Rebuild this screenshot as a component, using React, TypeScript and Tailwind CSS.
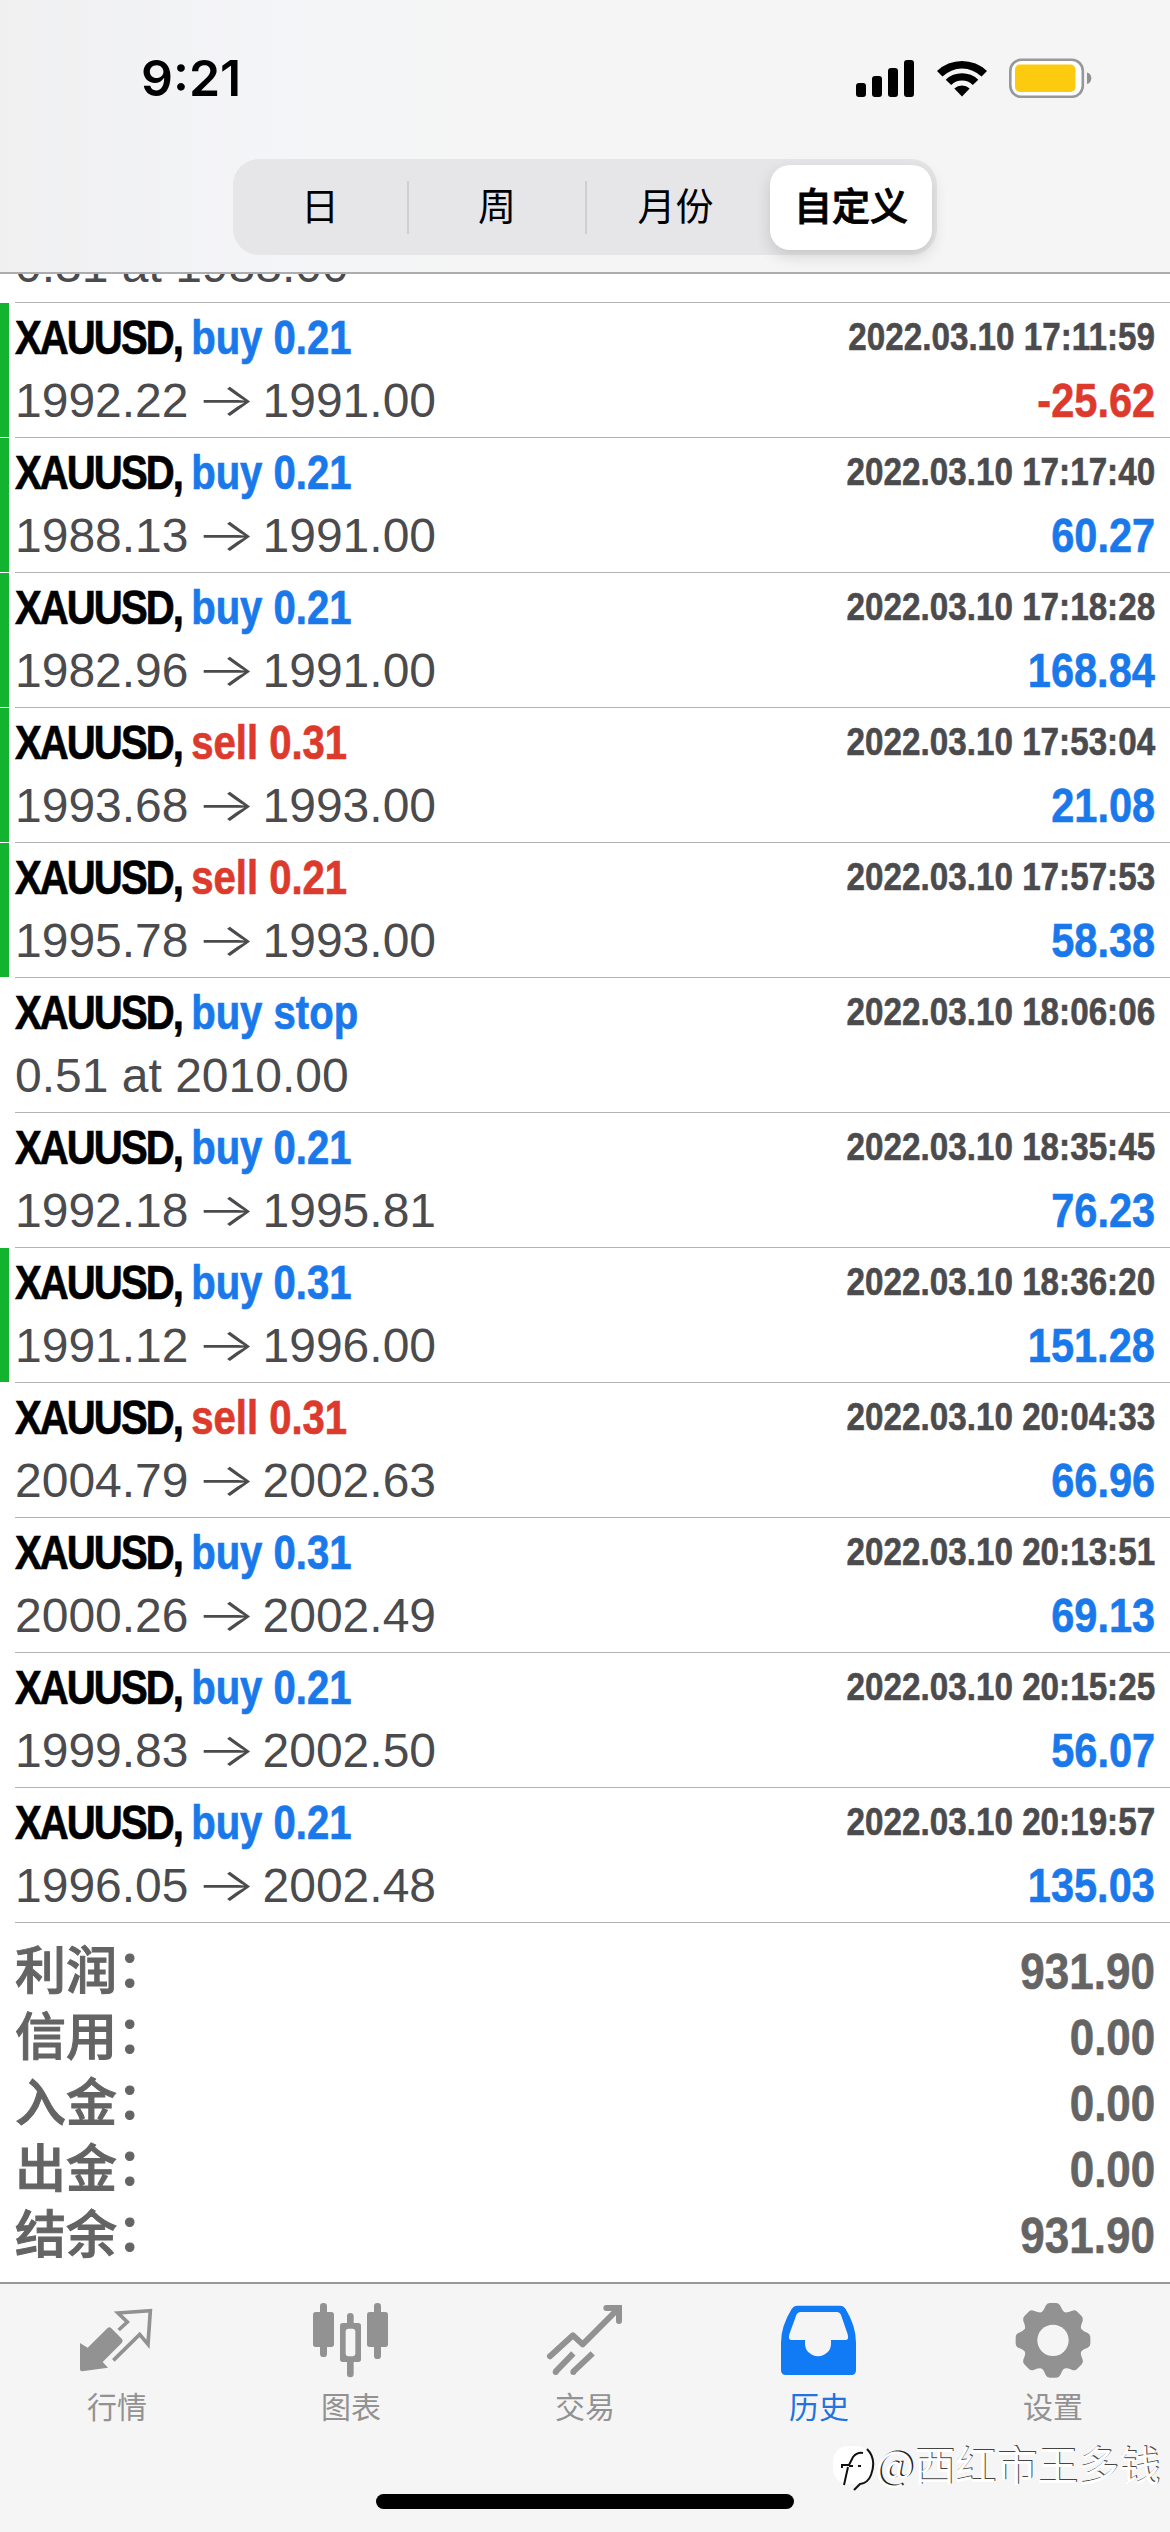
import { clsx } from 'clsx'
import type { ReactNode } from 'react'

type Deal = {
  side: 'buy' | 'sell' | 'buy stop'
  lot?: string
  from?: string
  to?: string
  note?: string
  time: string
  profit?: string
  mark?: boolean
}

const DEALS: Deal[] = [
  { side: 'buy', lot: '0.21', from: '1992.22', to: '1991.00', time: '2022.03.10 17:11:59', profit: '-25.62', mark: true },
  { side: 'buy', lot: '0.21', from: '1988.13', to: '1991.00', time: '2022.03.10 17:17:40', profit: '60.27', mark: true },
  { side: 'buy', lot: '0.21', from: '1982.96', to: '1991.00', time: '2022.03.10 17:18:28', profit: '168.84', mark: true },
  { side: 'sell', lot: '0.31', from: '1993.68', to: '1993.00', time: '2022.03.10 17:53:04', profit: '21.08', mark: true },
  { side: 'sell', lot: '0.21', from: '1995.78', to: '1993.00', time: '2022.03.10 17:57:53', profit: '58.38', mark: true },
  { side: 'buy stop', note: '0.51 at 2010.00', time: '2022.03.10 18:06:06' },
  { side: 'buy', lot: '0.21', from: '1992.18', to: '1995.81', time: '2022.03.10 18:35:45', profit: '76.23' },
  { side: 'buy', lot: '0.31', from: '1991.12', to: '1996.00', time: '2022.03.10 18:36:20', profit: '151.28', mark: true },
  { side: 'sell', lot: '0.31', from: '2004.79', to: '2002.63', time: '2022.03.10 20:04:33', profit: '66.96' },
  { side: 'buy', lot: '0.31', from: '2000.26', to: '2002.49', time: '2022.03.10 20:13:51', profit: '69.13' },
  { side: 'buy', lot: '0.21', from: '1999.83', to: '2002.50', time: '2022.03.10 20:15:25', profit: '56.07' },
  { side: 'buy', lot: '0.21', from: '1996.05', to: '2002.48', time: '2022.03.10 20:19:57', profit: '135.03' },
]

const TOTALS = [
  ['利润', '931.90'],
  ['信用', '0.00'],
  ['入金', '0.00'],
  ['出金', '0.00'],
  ['结余', '931.90'],
]

function StatusBar() {
  return (
    <div className="flex h-[159px] items-start justify-between pt-[46px] pr-[77px] pl-[141px]">
      <div className="font-['Inter','Liberation_Sans',sans-serif] text-[50px] leading-[64px] font-semibold">9:21</div>
      <div className="flex h-[64px] items-center gap-[22px]">
        <svg width="60" height="38" viewBox="0 0 60 38">
          <rect x="1" y="24" width="10" height="14" rx="3" />
          <rect x="17" y="17" width="10" height="21" rx="3" />
          <rect x="33" y="9" width="10" height="29" rx="3" />
          <rect x="49" y="1" width="10" height="37" rx="3" />
        </svg>
        <svg width="50" height="38" viewBox="0 0 50 38">
          <path d="M0 12 A36 36 0 0 1 50 12 L44.5 17.5 A28 28 0 0 0 5.5 17.5 Z" />
          <path d="M8.7 20.7 A23.5 23.5 0 0 1 41.3 20.7 L35.8 26 A15.5 15.5 0 0 0 14.2 26 Z" />
          <path d="M17.3 29.5 A11.5 11.5 0 0 1 32.7 29.5 L25 37.5 Z" />
        </svg>
        <svg width="84" height="40" viewBox="0 0 84 40">
          <rect x="1.3" y="1.8" width="72.5" height="37" rx="11" fill="#fff" stroke="#97989c" strokeWidth="2.6" />
          <rect x="6" y="6.5" width="60.5" height="27.5" rx="5" fill="#fcca0e" />
          <path d="M78 14.5 a6 6 0 0 1 0 11.5 Z" fill="#8f9094" />
        </svg>
      </div>
    </div>
  )
}

function Segments() {
  return (
    <div className="mx-auto flex h-[96px] w-[704px] items-center rounded-[26px] bg-[#e6e6e8] text-[38px] leading-none">
      <div className="flex h-[53px] w-[176px] items-center justify-center border-r-2 border-[#cfcfd1]">日</div>
      <div className="flex h-[53px] w-[178px] items-center justify-center border-r-2 border-[#cfcfd1]">周</div>
      <div className="flex w-[183px] items-center justify-center pr-[6px]">月份</div>
      <div className="flex h-[85px] w-[162px] items-center justify-center rounded-[20px] bg-white font-medium shadow-[0_6px_16px_rgba(0,0,0,0.14)] [-webkit-text-stroke:0.9px]">
        自定义
      </div>
    </div>
  )
}

function DealRow({ deal }: { deal: Deal }) {
  const tone = deal.side === 'sell' ? 'text-[#dd3a2e]' : 'text-[#1a79ea]'
  const loss = deal.profit?.startsWith('-')
  return (
    <div className="flex h-[135px]">
      <div className={clsx('mb-px w-[9px]', deal.mark && 'bg-[#12b32e]')} />
      <div className="ml-[6px] flex flex-1 flex-col border-b border-[#b4b4b6] pt-[3px] pr-[15px]">
        <div className="flex h-[64px] items-center justify-between whitespace-nowrap">
          <span className="origin-left scale-x-[0.835] text-[48px] font-bold text-black [-webkit-text-stroke:0.7px]">
            <span className="tracking-[-2.3px]">XAUUSD, </span>
            <span className={tone}>{deal.side} {deal.lot}</span>
          </span>
          <span className="origin-right scale-x-[0.852] pb-[2px] text-[39px] font-bold text-[#4b4b4e] [-webkit-text-stroke:0.6px]">
            {deal.time}
          </span>
        </div>
        <div className="flex h-[62px] items-center justify-between whitespace-nowrap">
          <span className="flex items-center text-[48px] text-[#4b4b4e]">
            {deal.note ?? (
              <>
                {deal.from}
                <span className="w-[74px] scale-x-[1.38] pb-[5px] text-center font-['Inter',sans-serif] text-[46px] leading-none font-light">→</span>
                {deal.to}
              </>
            )}
          </span>
          <span
            className={clsx(
              'origin-right scale-x-[0.865] text-[48px] font-bold [-webkit-text-stroke:0.6px]',
              loss ? 'text-[#dd3a2e]' : 'text-[#1a79ea]',
            )}
          >
            {deal.profit}
          </span>
        </div>
      </div>
    </div>
  )
}

function Totals() {
  return (
    <div className="flex flex-1 flex-col pt-[16px] pr-[15px] pl-[15px] text-[#646464]">
      {TOTALS.map(([label, value]) => (
        <div key={label} className="flex h-[66px] items-center justify-between">
          <span className="flex text-[51px] leading-[66px] font-medium [-webkit-text-stroke:1px]">
            {label}
            <span className="-translate-y-[2px]">：</span>
          </span>
          <span className="origin-right scale-x-[0.88] text-[50px] font-bold [-webkit-text-stroke:0.6px]">{value}</span>
        </div>
      ))}
    </div>
  )
}

function QuotesIcon() {
  return (
    <svg width="78" height="78" viewBox="234 90 234 234" fill="none">
      <path d="M240 216 L263 230 L322 172 Q328 166 334 172 L366 204 Q371 210 365 216 L308 273 L324 290 L246 301 Q240 301 240 294 Z" fill="#929292" />
      <path d="M356 177 L382 153 L354 126 L451 119 L444 220 L419 190 L340 268" stroke="#929292" strokeWidth="11" />
    </svg>
  )
}

function ChartIcon() {
  return (
    <svg width="78" height="78" viewBox="936 90 234 234" fill="#929292">
      <rect x="939" y="123" width="63" height="105" rx="8" />
      <rect x="960" y="96" width="21" height="162" rx="10" />
      <rect x="1101" y="123" width="63" height="105" rx="8" />
      <rect x="1122" y="96" width="21" height="168" rx="10" />
      <rect x="1041" y="126" width="20" height="60" rx="10" />
      <rect x="1041" y="250" width="20" height="69" rx="10" />
      <rect x="1020" y="156" width="63" height="117" rx="8" />
      <rect x="1037" y="173" width="29" height="83" rx="9" fill="#f5f5f5" />
    </svg>
  )
}

function TradeIcon() {
  return (
    <svg width="78" height="78" viewBox="198 90 234 234" fill="none" stroke="#929292" strokeWidth="18">
      <path d="M210 256 L279 193 L308 220 L415 113" strokeLinecap="round" strokeLinejoin="round" />
      <path d="M379 111 H417 V150" strokeLinecap="round" />
      <path d="M280 247 L227 302 M338 247 L280 302" />
      <circle cx="227" cy="303" r="9" fill="#929292" stroke="none" />
      <circle cx="280" cy="303" r="9" fill="#929292" stroke="none" />
    </svg>
  )
}

function HistoryIcon() {
  return (
    <svg width="78" height="78" viewBox="900 90 234 234">
      <path d="M952 104 H1080 Q1091 104 1097 114 Q1128 165 1128 215 V298 Q1128 312 1114 312 H918 Q903 312 903 298 V215 Q903 165 935 114 Q941 104 952 104 Z" fill="#117af5" />
      <path d="M962 123 H1070 Q1079 123 1083 132 L1103 190 Q1107 207 1098 207 H1053 V218 A39 38 0 0 1 975 218 V207 H933 Q924 207 928 190 L949 132 Q953 123 962 123 Z" fill="#f5f5f5" />
    </svg>
  )
}

function SettingsIcon() {
  return (
    <svg width="78" height="78" viewBox="-117 -118 234 234" fill="#929292">
      {[0, 45, 90, 135, 180, 225, 270, 315].map((deg) => (
        <path key={deg} transform={`rotate(${deg})`} d="M-42 -80 Q-31 -84 -27 -93 L-22 -104 Q-18 -112 -10 -112 H10 Q18 -112 22 -104 L27 -93 Q31 -84 42 -80 V-50 H-42 Z" />
      ))}
      <path d="M0 -88 A88 88 0 1 1 0 88 A88 88 0 1 1 0 -88 Z" />
      <circle r="47" fill="#f5f5f5" />
    </svg>
  )
}

function Tab({ label, active, children }: { label: string; active?: boolean; children: ReactNode }) {
  return (
    <div className="flex flex-1 flex-col items-center pt-[17px]">
      {children}
      <span className={clsx('mt-[7px] text-[30px] leading-[44px]', active ? 'text-[#2272e0]' : 'text-[#929292]')}>{label}</span>
    </div>
  )
}

function Watermark() {
  return (
    <div className="absolute right-[10px] bottom-[35px] flex items-center text-[41px] leading-[60px] text-white [text-shadow:1px_-1px_0_#444]">
      <svg width="42" height="48" viewBox="0 0 42 48" fill="none">
        <rect x="0" y="3" width="38" height="38" rx="15" fill="#fff" />
        <path d="M11 42 L15 24 M9 25 V22 H16 L20 14 Q24 9 30 10 M16 23 H20 M25 23 H28" stroke="#111" strokeWidth="2" />
        <path d="M34 6 Q44 16 38 32 Q35 40 27 41 L21 47" stroke="#111" strokeWidth="2" />
      </svg>
      <span className="-translate-y-[4px] font-['Noto_Sans_CJK_SC',sans-serif] [text-shadow:1.5px_-1px_0_#222]">@</span>
      西红市王多钱
    </div>
  )
}

export default function App() {
  return (
    <div className="relative flex h-[2532px] w-[1170px] flex-col overflow-hidden bg-white font-['Liberation_Sans','Noto_Sans_CJK_SC',sans-serif] text-black">
      <header className="h-[274px] border-b-2 border-[#adadaf] bg-linear-to-r from-[#f0f0f1] via-[#f4f5f8] via-25% to-[#f5f5f5] to-40%">
        <StatusBar />
        <Segments />
      </header>

      {/* row scrolled half under the header */}
      <div className="ml-[15px] flex h-[29px] items-end overflow-hidden border-b border-[#b4b4b6]">
        <span className="mb-[9px] text-[48px] leading-[55px] text-[#4b4b4e]">0.31 at 1988.00</span>
      </div>

      {DEALS.map((deal) => (
        <DealRow key={deal.time} deal={deal} />
      ))}
      <Totals />

      <nav className="h-[250px] border-t-2 border-[#98989a] bg-[#f5f5f5]">
        <div className="flex">
          <Tab label="行情"><QuotesIcon /></Tab>
          <Tab label="图表"><ChartIcon /></Tab>
          <Tab label="交易"><TradeIcon /></Tab>
          <Tab label="历史" active><HistoryIcon /></Tab>
          <Tab label="设置"><SettingsIcon /></Tab>
        </div>
        <div className="mx-auto mt-[64px] h-[15px] w-[418px] rounded-full bg-black" />
      </nav>
      <Watermark />
    </div>
  )
}
